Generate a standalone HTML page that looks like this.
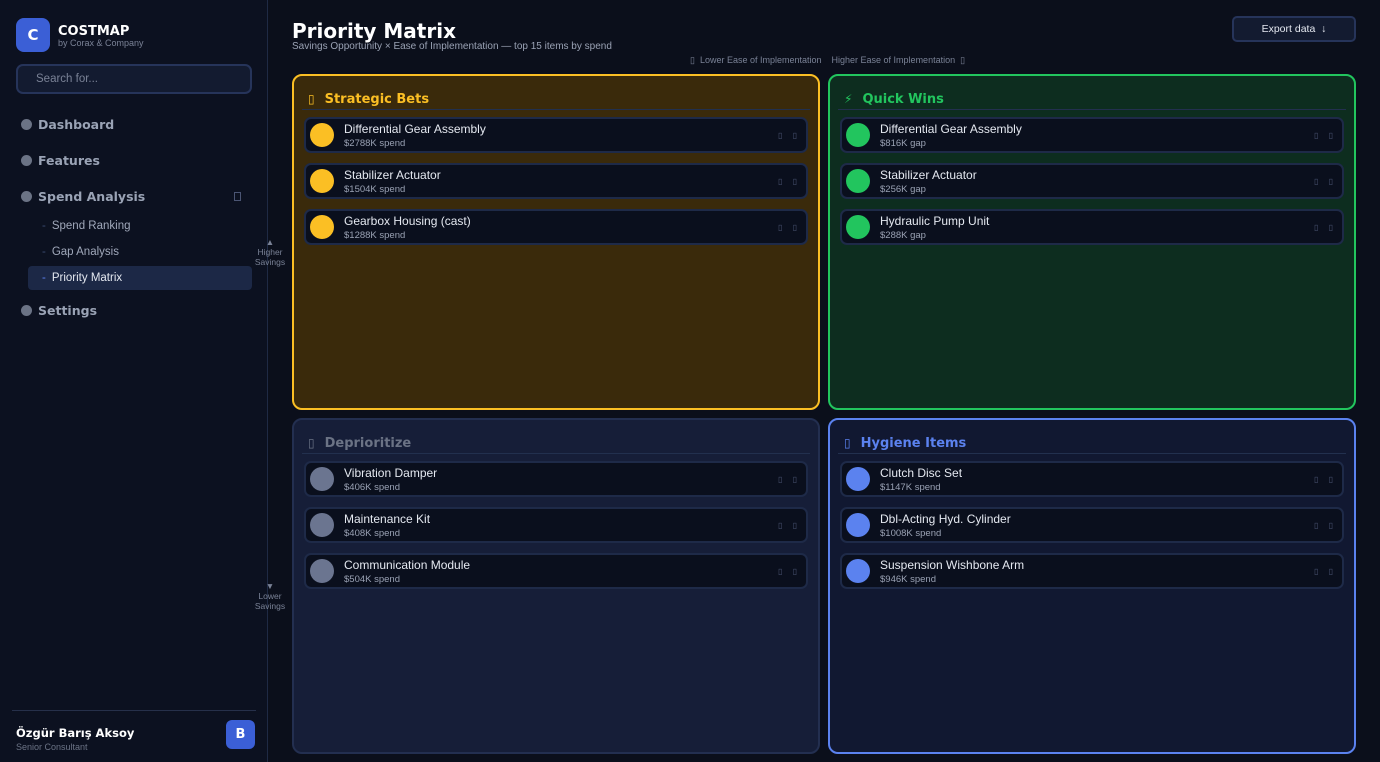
<!DOCTYPE html>
<html><head><meta charset="utf-8"><style>
*{box-sizing:border-box;margin:0;padding:0}
body{width:1380px;height:762px;background:#0b0f1b;font-family:"Liberation Sans",sans-serif;position:relative;overflow:hidden;color:#e5e7eb}
.a{position:absolute}
.sb{left:0;top:0;width:268px;height:762px;background:#0c1120;border-right:1px solid #1f2a44}
.logo{left:16px;top:18px;width:34px;height:34px;border-radius:8px;background:#3b5fd6;color:#fff;font:bold 15px "DejaVu Sans",sans-serif;display:flex;align-items:center;justify-content:center}
.dv{font-family:"DejaVu Sans",sans-serif;font-weight:bold}
.nav{left:21px;font:bold 12.5px "DejaVu Sans",sans-serif;color:#9aa3b5;display:flex;align-items:center}
.nav i{display:inline-block;width:11px;height:11px;border-radius:50%;background:#6b7385;margin-right:6px}
.sub{left:42px;font-size:11.5px;color:#a0a8ba}
.sub b{color:#3a4a70;font-weight:normal;margin-right:6px}
.q{width:528px;height:336px;border-radius:10px;border:2px solid}
.qh{position:absolute;left:14px;top:16px;font:bold 13px "DejaVu Sans",sans-serif}
.qh span{font-weight:normal;margin-right:10px;font-size:12px}
.ql{position:absolute;left:8px;right:8px;top:33px;height:1px;background:#22304e}
.it{position:absolute;left:10px;right:10px;height:36px;background:#0a0f1d;border:2px solid #1e2a48;border-radius:7px}
.it .c{position:absolute;left:4px;top:4px;width:24px;height:24px;border-radius:50%}
.it .n{position:absolute;left:38px;top:3px;font-size:12px;color:#e4e8f0}
.it .s{position:absolute;left:38px;top:19px;font-size:9.5px;color:#9aa2b4}
.it .x{position:absolute;right:5px;top:12px;font-size:8px;color:#4b5573;letter-spacing:4px}
.x::before{content:"▯ ▯"}
</style></head><body>
<div class="a sb"></div>
<div class="a logo">C</div>
<div class="a dv" style="left:58px;top:24px;font-size:13px;color:#fff">COSTMAP</div>
<div class="a" style="left:58px;top:38px;font-size:9px;color:#7a8296">by Corax &amp; Company</div>
<div class="a" style="left:16px;top:64px;width:236px;height:30px;border:2px solid #26345a;border-radius:7px;background:#131b30"></div>
<div class="a" style="left:36px;top:73px;font-size:11.5px;color:#7a8296">Search for...</div>
<div class="a nav" style="top:117px"><i></i>Dashboard</div>
<div class="a nav" style="top:153px"><i></i>Features</div>
<div class="a nav" style="top:189px"><i></i>Spend Analysis</div>
<div class="a" style="left:234px;top:192px;width:7px;height:9px;border:1px solid #4b5573"></div>
<div class="a sub" style="top:220px"><b>-</b>Spend Ranking</div>
<div class="a sub" style="top:246px"><b>-</b>Gap Analysis</div>
<div class="a" style="left:28px;top:266px;width:224px;height:24px;background:#1c2846;border-radius:4px"></div>
<div class="a sub" style="top:272px;color:#e4e8f0"><b style="color:#5b7fef">-</b>Priority Matrix</div>
<div class="a nav" style="top:303px"><i></i>Settings</div>
<div class="a" style="left:12px;top:710px;width:244px;height:1px;background:#26304a"></div>
<div class="a dv" style="left:16px;top:726px;font-size:11.5px;color:#fff">Özgür Barış Aksoy</div>
<div class="a" style="left:16px;top:742px;font-size:9px;color:#6b7385">Senior Consultant</div>
<div class="a" style="left:226px;top:720px;width:29px;height:29px;border-radius:6px;background:#3b5fd6;color:#fff;font:bold 13px 'DejaVu Sans',sans-serif;display:flex;align-items:center;justify-content:center">B</div>

<div class="a dv" style="left:292px;top:19px;font-size:20px;color:#fff">Priority Matrix</div>
<div class="a" style="left:292px;top:41px;font-size:10px;color:#9aa2b4">Savings Opportunity × Ease of Implementation — top 15 items by spend</div>
<div class="a" style="left:1232px;top:16px;width:124px;height:26px;border:2px solid #26345a;border-radius:5px;background:#131b30;font-size:10.5px;color:#e4e8f0;display:flex;align-items:center;justify-content:center">Export data &nbsp;↓</div>
<div class="a" style="left:690px;top:55px;font-size:9px;color:#7a8296">▯ &nbsp;Lower Ease of Implementation &nbsp;&nbsp; Higher Ease of Implementation &nbsp;▯</div>
<div class="a" style="left:252px;top:237px;width:36px;text-align:center;font-size:8.5px;color:#7a8296;line-height:10px">▲<br>Higher<br>Savings</div>
<div class="a" style="left:252px;top:581px;width:36px;text-align:center;font-size:8.5px;color:#7a8296;line-height:10px">▼<br>Lower<br>Savings</div>

<div class="a q" style="left:292px;top:74px;background:#3a2a0b;border-color:#fbbf24">
<div class="qh" style="color:#fbbf24"><span>▯</span>Strategic Bets</div><div class="ql"></div>
<div class="it" style="top:41px"><div class="c" style="background:#fbbf24"></div><div class="n">Differential Gear Assembly</div><div class="s">$2788K spend</div><div class="x"></div></div>
<div class="it" style="top:87px"><div class="c" style="background:#fbbf24"></div><div class="n">Stabilizer Actuator</div><div class="s">$1504K spend</div><div class="x"></div></div>
<div class="it" style="top:133px"><div class="c" style="background:#fbbf24"></div><div class="n">Gearbox Housing (cast)</div><div class="s">$1288K spend</div><div class="x"></div></div>
</div>
<div class="a q" style="left:828px;top:74px;background:#0d2d1f;border-color:#22c55e">
<div class="qh" style="color:#22c55e"><span>⚡</span>Quick Wins</div><div class="ql"></div>
<div class="it" style="top:41px"><div class="c" style="background:#22c55e"></div><div class="n">Differential Gear Assembly</div><div class="s">$816K gap</div><div class="x"></div></div>
<div class="it" style="top:87px"><div class="c" style="background:#22c55e"></div><div class="n">Stabilizer Actuator</div><div class="s">$256K gap</div><div class="x"></div></div>
<div class="it" style="top:133px"><div class="c" style="background:#22c55e"></div><div class="n">Hydraulic Pump Unit</div><div class="s">$288K gap</div><div class="x"></div></div>
</div>
<div class="a q" style="left:292px;top:418px;background:#161e38;border-color:#232f50">
<div class="qh" style="color:#6b7385"><span>▯</span>Deprioritize</div><div class="ql"></div>
<div class="it" style="top:41px"><div class="c" style="background:#6b7590"></div><div class="n">Vibration Damper</div><div class="s">$406K spend</div><div class="x"></div></div>
<div class="it" style="top:87px"><div class="c" style="background:#6b7590"></div><div class="n">Maintenance Kit</div><div class="s">$408K spend</div><div class="x"></div></div>
<div class="it" style="top:133px"><div class="c" style="background:#6b7590"></div><div class="n">Communication Module</div><div class="s">$504K spend</div><div class="x"></div></div>
</div>
<div class="a q" style="left:828px;top:418px;background:#111831;border-color:#5b82ef">
<div class="qh" style="color:#5b82ef"><span>▯</span>Hygiene Items</div><div class="ql"></div>
<div class="it" style="top:41px"><div class="c" style="background:#5b82ef"></div><div class="n">Clutch Disc Set</div><div class="s">$1147K spend</div><div class="x"></div></div>
<div class="it" style="top:87px"><div class="c" style="background:#5b82ef"></div><div class="n">Dbl-Acting Hyd. Cylinder</div><div class="s">$1008K spend</div><div class="x"></div></div>
<div class="it" style="top:133px"><div class="c" style="background:#5b82ef"></div><div class="n">Suspension Wishbone Arm</div><div class="s">$946K spend</div><div class="x"></div></div>
</div>
</body></html>
